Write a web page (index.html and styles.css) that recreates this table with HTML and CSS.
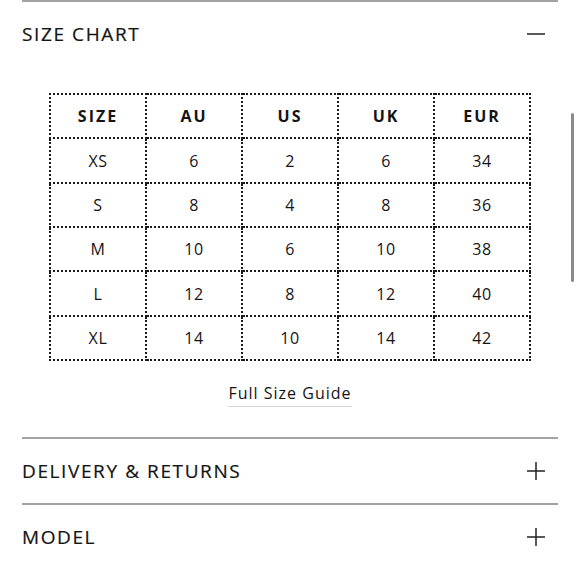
FILE: index.html
```html
<!DOCTYPE html>
<html>
<head>
<meta charset="utf-8">
<link rel="stylesheet" href="styles.css">
</head>
<body>
<div class="page">
  <section class="acc open">
    <div class="acc-head">
      <span class="acc-title">SIZE CHART</span>
      <svg class="icon" width="18" height="18" viewBox="0 0 18 18"><path d="M0 9H18" stroke="#222" stroke-width="1.5"/></svg>
    </div>
    <div class="acc-body">
      <table class="chart">
        <thead>
          <tr><th>SIZE</th><th>AU</th><th>US</th><th>UK</th><th>EUR</th></tr>
        </thead>
        <tbody>
          <tr><td>XS</td><td>6</td><td>2</td><td>6</td><td>34</td></tr>
          <tr><td>S</td><td>8</td><td>4</td><td>8</td><td>36</td></tr>
          <tr><td>M</td><td>10</td><td>6</td><td>10</td><td>38</td></tr>
          <tr><td>L</td><td>12</td><td>8</td><td>12</td><td>40</td></tr>
          <tr><td>XL</td><td>14</td><td>10</td><td>14</td><td>42</td></tr>
        </tbody>
      </table>
      <div class="guide-wrap"><a class="guide" href="#">Full Size Guide</a></div>
    </div>
  </section>
  <section class="acc">
    <div class="acc-head">
      <span class="acc-title">DELIVERY &amp; RETURNS</span>
      <svg class="icon" width="18" height="18" viewBox="0 0 18 18"><path d="M0 9H18M9 0V18" stroke="#222" stroke-width="1.5"/></svg>
    </div>
  </section>
  <section class="acc">
    <div class="acc-head">
      <span class="acc-title">MODEL</span>
      <svg class="icon" width="18" height="18" viewBox="0 0 18 18"><path d="M0 9H18M9 0V18" stroke="#222" stroke-width="1.5"/></svg>
    </div>
  </section>
</div>
<div class="scrollbar"></div>
</body>
</html>
```
FILE: styles.css
```css
html, body {
  margin: 0;
  padding: 0;
  background: #fff;
}
body {
  font-family: "Open Sans", "Liberation Sans", sans-serif;
  color: #141414;
  width: 580px;
  height: 580px;
  overflow: hidden;
}
.page {
  padding: 0 22px;
}
.acc {
  border-top: 2px solid #a3a3a3;
}
.acc-head {
  height: 64px;
  display: flex;
  align-items: center;
  justify-content: space-between;
  padding-right: 13px;
}
.acc-title {
  font-size: 19px;
  letter-spacing: 1.6px;
  font-weight: 400;
  -webkit-text-stroke: 0.2px #141414;
}
.icon {
  display: block;
}
.acc-body {
  padding-top: 27px;
  padding-bottom: 30px;
}
.chart {
  border-collapse: collapse;
  margin: 0 auto;
  width: 482px;
  table-layout: fixed;
}
.chart th, .chart td {
  border: 2px dotted #1a1a1a;
  height: 42.35px;
  padding: 0;
  text-align: center;
  font-size: 16px;
}
.chart th {
  font-weight: 700;
  letter-spacing: 2px;
}
.chart td {
  font-weight: 400;
  letter-spacing: 0.6px;
}
.guide-wrap {
  text-align: center;
  margin-top: 22px;
  line-height: 20px;
}
.guide {
  display: inline-block;
  color: #141414;
  text-decoration: none;
  font-size: 16px;
  letter-spacing: 1px;
  line-height: 20px;
  padding-bottom: 3px;
  border-bottom: 1px solid #d4d4d4;
  vertical-align: top;
}
.scrollbar {
  position: absolute;
  left: 571px;
  top: 113px;
  width: 3px;
  height: 169px;
  border-radius: 2px;
  background: #8a8a8a;
}
```
